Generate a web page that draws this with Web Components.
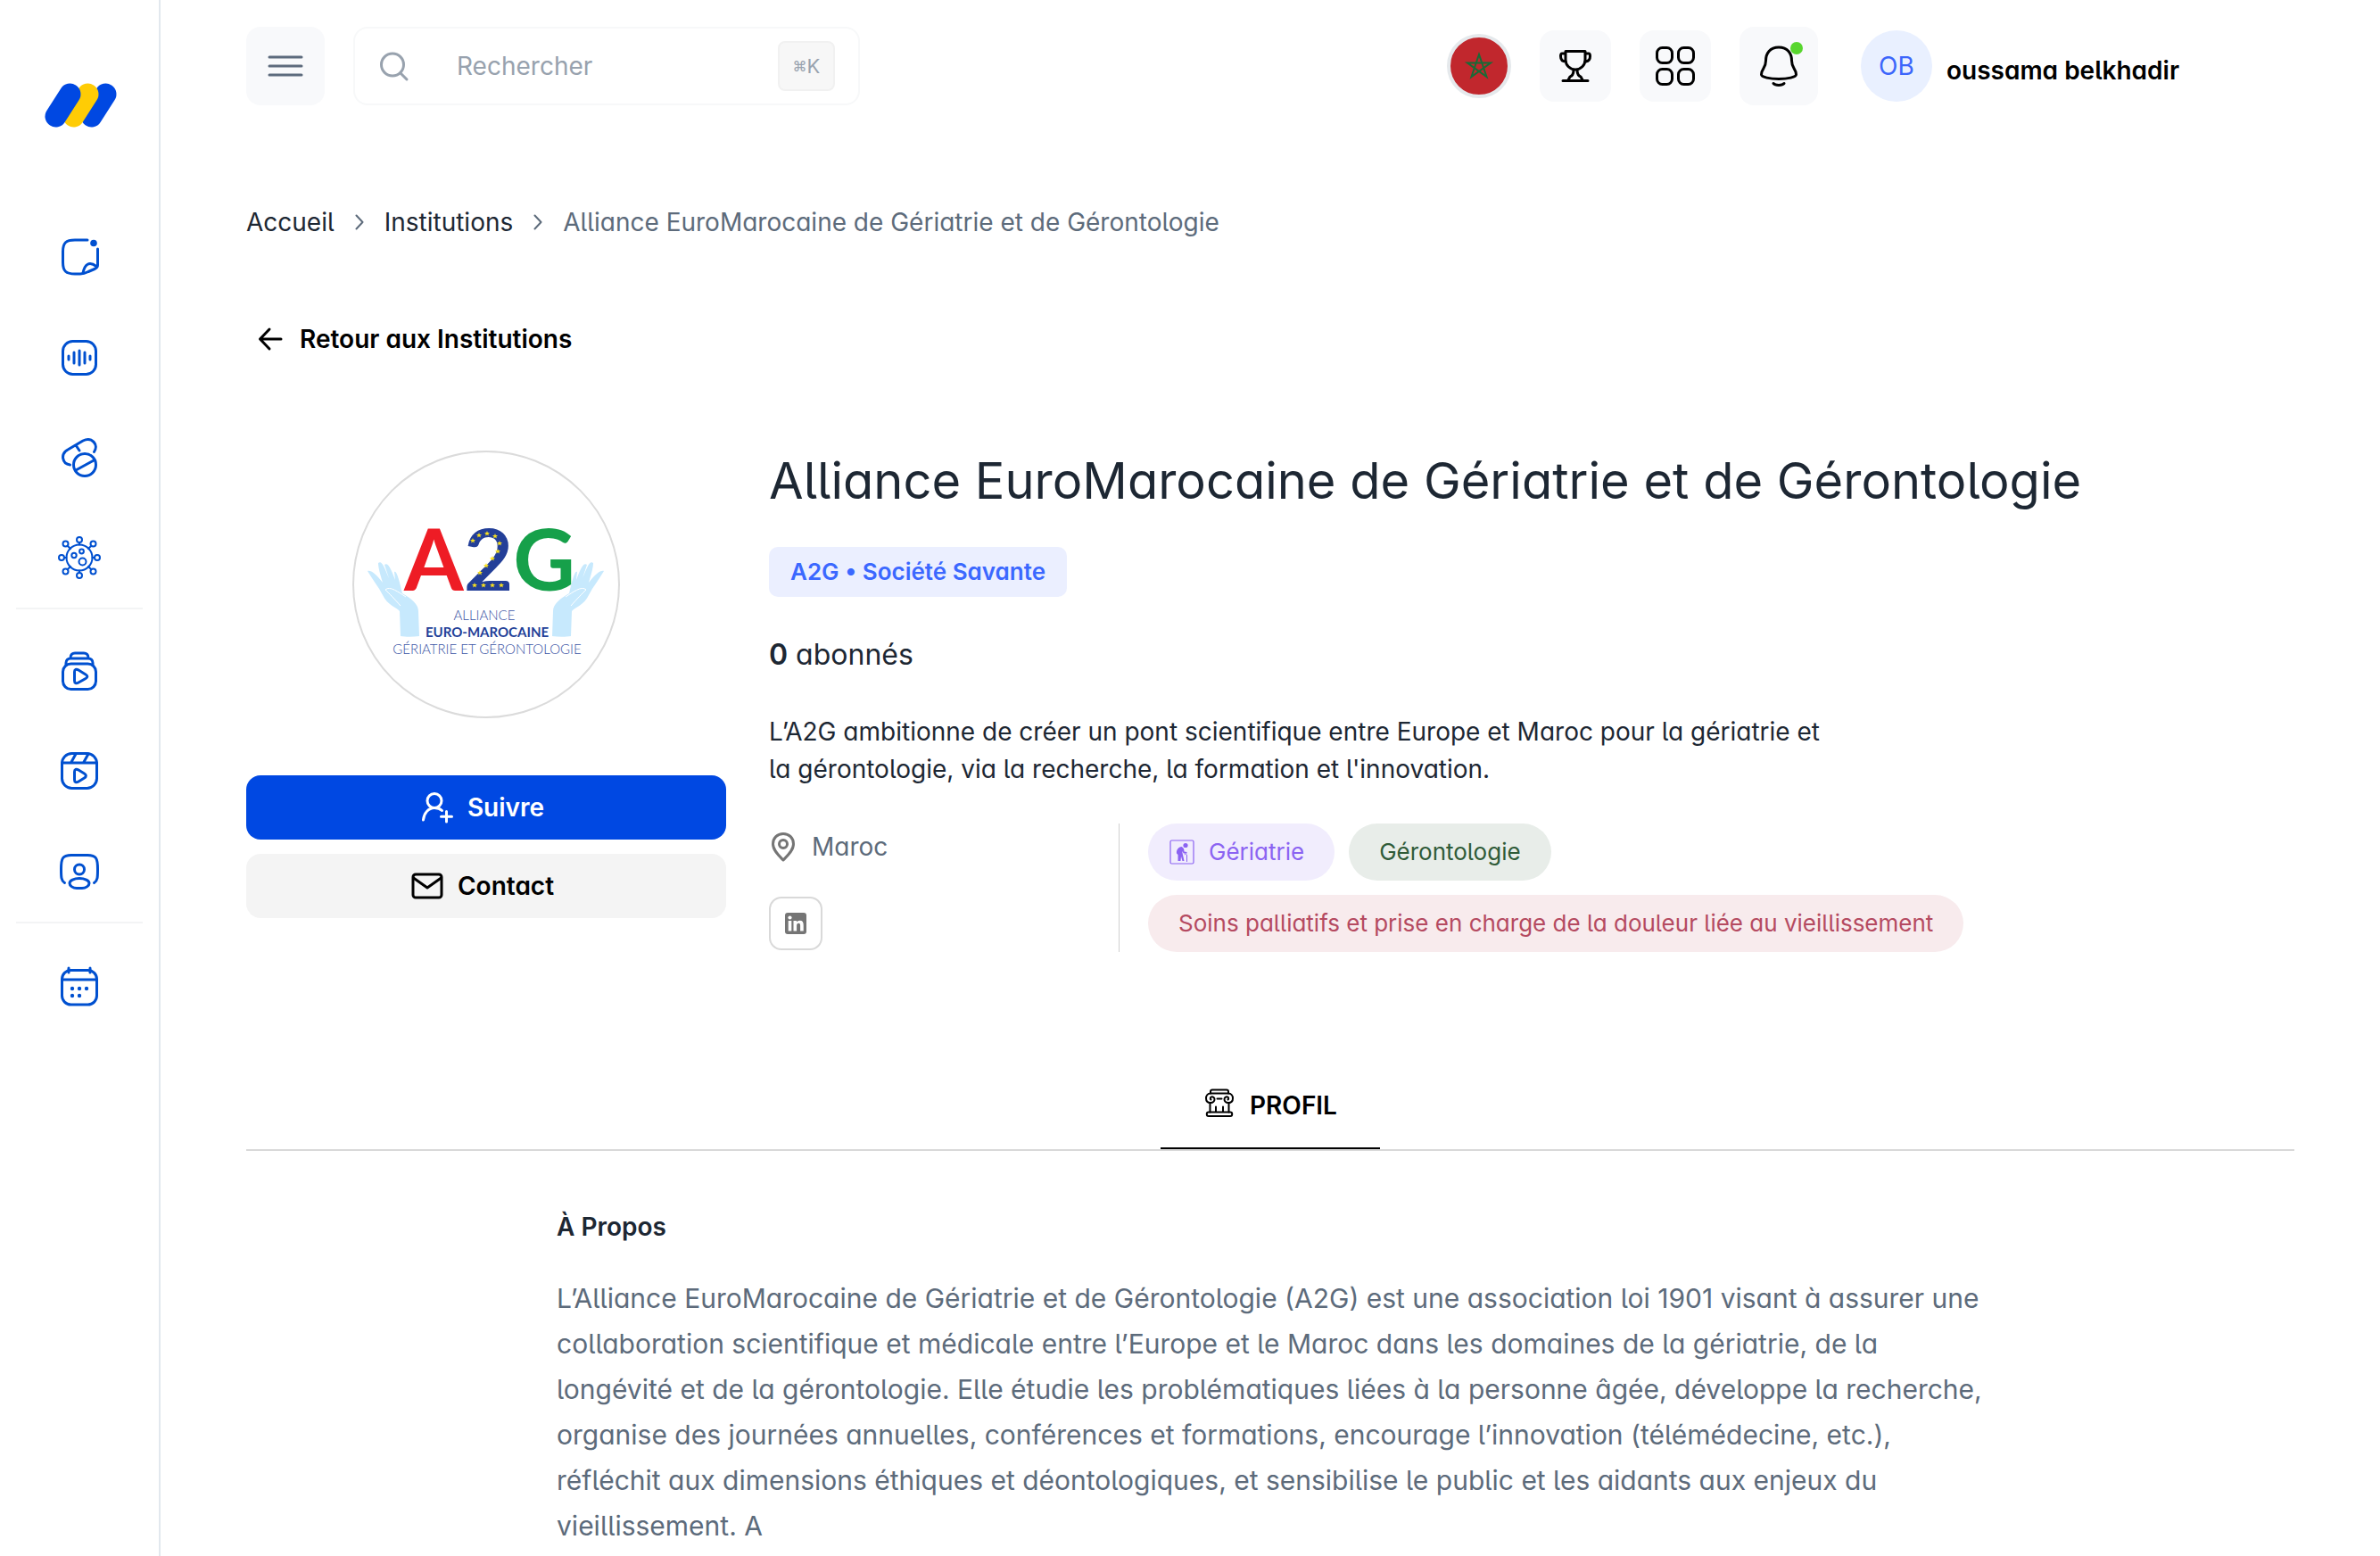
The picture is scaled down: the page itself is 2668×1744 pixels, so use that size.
<!DOCTYPE html>
<html lang="fr">
<head>
<meta charset="utf-8">
<meta name="viewport" content="width=device-width, initial-scale=1">
<title>Alliance EuroMarocaine de Gériatrie et de Gérontologie</title>
<style>
    body{
        margin:0;
        background:#fff;
        color:#1d2733;
        font-family:Inter, "Liberation Sans", sans-serif;
        font-size:28px;
        line-height:42px;
        font-feature-settings:"cv05", "cv11";
    }
</style>
</head>
<body>
<app-root></app-root>

<script>
// [width, height, markup]
const ICONS = {
    logo: [80, 52, `<g stroke-width="24" stroke-linecap="round"><path d="M69.500 13.500 53.500 38.500" stroke="#0048e2"/><path d="M49.500 13.500 33.500 38.500" stroke="#ffcc05"/><path d="M29.500 13.500 13.500 38.500" stroke="#0048e2"/></g>`],
    note: [48, 48, `<path d="M33 4H19C9 4 5.500 7 5.500 17V29C5.500 39 9 42 19 42H25C29 42 31 41 34 39.500L41 36.500C43.500 35.500 44.500 34.500 44.500 32V14"/><path d="M28 41C30 31 35 27.500 43 33.500"/><circle cx="40" cy="7.500" r="3.800" fill="currentColor" stroke="none"/>`],
    wave: [48, 48, `<rect x="5.500" y="5.500" width="37" height="37" rx="11"/><g stroke-width="3"><path d="M12 22V26M18 18V30M24 16V32M30 18V30M36 22V26"/></g>`],
    pills: [48, 48, `<circle cx="30" cy="32" r="12.500"/><path d="M20 38 41 26.500M13.500 32C4.500 31 2.500 19.500 11 15L28 5C38 0 46 9.500 40.500 17.500M20 10 24 16"/>`],
    virus: [48, 48, `<g stroke-width="2"><circle cx="24" cy="24" r="14.500"/><circle cx="24" cy="4" r="3"/><circle cx="24" cy="44" r="3"/><circle cx="4" cy="24" r="3"/><circle cx="44" cy="24" r="3"/><circle cx="8.500" cy="8.500" r="3"/><circle cx="39.500" cy="8.500" r="3"/><circle cx="8.500" cy="39.500" r="3"/><circle cx="39.500" cy="39.500" r="3"/><path d="M24 7V9.500M24 38.500V41M7 24H9.500M38.500 24H41M10.700 10.700 14 14M37.300 10.700 34 14M10.700 37.300 14 34M37.300 37.300 34 34"/><circle cx="18" cy="21.500" r="2.700"/><circle cx="26.500" cy="17" r="2.400"/><circle cx="27.500" cy="28.500" r="4"/></g>`],
    stack: [48, 48, `<rect x="5.500" y="15" width="37" height="28.500" rx="9"/><path d="M9 16V14C9 11 11 9 14 9H34C37 9 39 11 39 14V16M14 9V8C14 5 16 3 19 3H29C32 3 34 5 34 8V9"/><path d="M18.500 24V34C18.500 37 20.500 37.500 23 36L31 31.500C33.500 30 33.500 28.500 31 27L23 22C20.500 20.500 18.500 21 18.500 24Z"/>`],
    reel: [48, 48, `<rect x="4.500" y="3.500" width="39" height="39" rx="11"/><path d="M4.500 14H43.500M20 4 14.500 14M34 4 28.500 14"/><path d="M18.500 24V33C18.500 36 20.500 36.500 23 35L29.500 31C32 29.500 32 27.500 29.500 26L23 22C20.500 20.500 18.500 21 18.500 24Z"/>`],
    person: [48, 48, `<path d="M7.500 36.500C3.500 34 3.500 30 3.500 21C3.500 9 5 5.500 15 5.500H33C43 5.500 44.500 9 44.500 21C44.500 30 44.500 34 40.500 36.500"/><circle cx="24" cy="21.500" r="5.500"/><path d="M13 37C13 34 18 31.500 24 31.500S35 34 35 37S31 42.500 27 42.500H21C17 42.500 13 40 13 37Z"/>`],
    calendar: [48, 48, `<rect x="4.500" y="6.500" width="39" height="38.500" rx="10"/><path d="M4.500 17H43.500M12 4V9M36 4V9"/><g fill="currentColor" stroke="none"><circle cx="16" cy="27" r="2.200"/><circle cx="24" cy="27" r="2.200"/><circle cx="32" cy="27" r="2.200"/><circle cx="16" cy="35" r="2.200"/><circle cx="24" cy="35" r="2.200"/></g>`],
    menu: [40, 24, `<path d="M2 2H38M2 12H38M2 22H38" stroke-width="3"/>`],
    search: [32, 32, `<circle cx="14" cy="14.500" r="12.500"/><path d="M23 24 30 31"/>`],
    star: [30, 30, `<path d="M15 2 23.500 27 2 11.500H28L6.500 27Z" stroke-linejoin="miter"/>`],
    trophy: [36, 36, `<path d="M7 1.500H29V11C29 17 24 22 18 22S7 17 7 11ZM7 4H3C1.500 4 1.500 5 1.500 7C1.500 11 4 13 7.500 13M29 4H33C34.500 4 34.500 5 34.500 7C34.500 11 32 13 28.500 13M16 22C16 28 14 29 12 30L9.500 34.500M20 22C20 28 22 29 24 30L26.500 34.500M4 34.500H32"/>`],
    grid: [44, 44, `<rect x="1.500" y="1.500" width="17" height="17" rx="6"/><rect x="25.500" y="1.500" width="17" height="17" rx="6"/><rect x="1.500" y="25.500" width="17" height="17" rx="6"/><rect x="25.500" y="25.500" width="17" height="17" rx="6"/>`],
    bell: [48, 48, `<path d="M24 3C14 3 9.500 10 9.500 18C9.500 27 4.500 27 4.500 33.500C4.500 36.500 14 38.500 24 38.500S43.500 36.500 43.500 33.500C43.500 27 38.500 27 38.500 18C38.500 10 34 3 24 3Z"/><path d="M18 43.500C20 46 28 46 30 43.500"/>`],
    chevron: [10, 18, `<path d="M1.500 1.500 8.500 9 1.500 16.500"/>`],
    back: [26, 26, `<path d="M25 13H2M12 2 1.500 13 12 24"/>`],
    follow: [36, 36, `<circle cx="15" cy="10.500" r="8"/><path d="M2.500 32C3 25 8 18.500 15 18.500C18.500 18.500 21.500 19.500 23.500 21.500M28.500 22.500V34M22.500 28.200H34.500"/>`],
    mail: [36, 36, `<rect x="2" y="5" width="32" height="26" rx="3"/><path d="M2.500 9 18 20 33.500 9"/>`],
    pin: [32, 32, `<path d="M16 31C11 26 4.500 20 4.500 13C4.500 6 9.500 1.500 16 1.500S27.500 6 27.500 13C27.500 20 21 26 16 31Z"/><circle cx="16" cy="13" r="4.500"/>`],
    linkedin: [26, 26, `<rect x="1" y="1" width="24" height="24" rx="3" fill="currentColor" stroke="none"/><g fill="#fff" stroke="none"><circle cx="6.500" cy="6.500" r="2.100"/><path d="M4.700 10H8.300V21.500H4.700ZM10.500 10H14V11.600C14.700 10.400 16 9.700 17.600 9.700C20.600 9.700 21.700 11.600 21.700 14.800V21.500H18.100V15.500C18.100 13.800 17.700 12.800 16.300 12.800C14.800 12.800 14.100 13.900 14.100 15.500V21.500H10.500Z"/></g>`],
    elder: [28, 28, `<rect x="1" y="1" width="26" height="26" rx="1.500" stroke-width="1.200"/><g fill="currentColor" stroke="none"><circle cx="18" cy="6.500" r="2.600"/><path d="M13.500 8C10 8.500 7.500 11.500 8 15.500L9.500 17 9.500 24H12.500L13 19 14.500 24H16.500L14.500 15 14 13 16 15.500H19.500V14L16.500 13.500C16.500 11 16 9 13.500 8Z"/></g><path d="M17 16.500C18 15.500 19.500 16 19.500 18V24.500" stroke-width="1"/>`],
    column: [32, 32, `<path d="M6 5.500V3.500C6 2 6.500 1.500 8 1.500H24C25.500 1.500 26 2 26 3.500V5.500M5.500 16V26.500M26.500 16V26.500M12 20.500V26M20 20.500V26M13.500 11.500H18.500"/><path d="M6 5.500H26C29 5.500 31 8 31 11S29 16 26 16C23 16 21.500 14 21.500 12S23.500 9 25 9.500S26.500 12 25.500 12.500M6 5.500C3 5.500 1 8 1 11S3 16 6 16C9 16 10.500 14 10.500 12S8.500 9 7 9.500S5.500 12 6.500 12.500"/><rect x="1.800" y="26.500" width="28.400" height="4.500" rx="2"/>`]
};

class AppIcon extends HTMLElement {
    constructor(){
        super();
        this.attachShadow({mode:'open'});
    }

    connectedCallback(){
        const [width, height, markup] = ICONS[this.getAttribute('name')];

        const style = `
            <style>
                :host{
                    display:inline-flex;
                    flex:none;
                }
                svg{
                    display:block;
                    overflow:visible;
                    stroke-width:var(--stroke, 3);
                }
            </style>
        `;

        this.shadowRoot.innerHTML = style + `
            <svg width="${width}" height="${height}" viewBox="0 0 ${width} ${height}" fill="none"
                stroke="currentColor" stroke-linecap="round" stroke-linejoin="round" aria-hidden="true">${markup}</svg>
        `;
    }
}

class SideBar extends HTMLElement {
    constructor(){
        super();
        this.attachShadow({mode:'open'});
    }

    connectedCallback(){
        const groups = [
            [['note', 'Actualités'], ['wave', 'Podcasts'], ['pills', 'Médicaments'], ['virus', 'Maladies']],
            [['stack', 'Chaînes'], ['reel', 'Vidéos'], ['person', 'Experts']],
            [['calendar', 'Agenda']]
        ];

        const style = `
            <style>
                :host{
                    display:block;
                    box-sizing:border-box;
                    width:180px;
                    padding:92px 18px 0;
                    border-right:2px solid #e2e8ee;
                }
                .logo{
                    display:flex;
                    justify-content:center;
                    margin-bottom:89px;
                }
                ul{
                    list-style:none;
                    margin:0;
                    padding:0;
                }
                ul + ul{
                    border-top:2px solid #f3f4f5;
                    padding-top:14px;
                }
                li a{
                    display:flex;
                    align-items:center;
                    justify-content:center;
                    height:112px;
                    color:#0050d0;
                }
            </style>
        `;

        const lists = groups.map(group => `
            <ul>${group.map(([icon, label]) => `
                <li><a href="#" aria-label="${label}"><app-icon name="${icon}"></app-icon></a></li>`).join('')}
            </ul>`).join('');

        this.shadowRoot.innerHTML = style + `
            <a class="logo" href="#" aria-label="Accueil"><app-icon name="logo"></app-icon></a>
            <nav>${lists}</nav>
        `;
    }
}

class SearchBox extends HTMLElement {
    constructor(){
        super();
        this.attachShadow({mode:'open'});
    }

    connectedCallback(){
        const style = `
            <style>
                :host{
                    display:block;
                    width:568px;
                }
                .box{
                    display:flex;
                    align-items:center;
                    box-sizing:border-box;
                    height:88px;
                    padding:0 26px 0 28px;
                    border:2px solid #f7f8f9;
                    border-radius:16px;
                }
                label{
                    display:flex;
                    margin-right:54px;
                    color:#98a2ae;
                }
                input{
                    flex:1;
                    min-width:0;
                    padding:0;
                    border:0;
                    outline:0;
                    background:none;
                    color:#1d2733;
                    font:inherit;
                    font-feature-settings:inherit;
                }
                input::placeholder{
                    color:#98a2ae;
                    opacity:1;
                }
                kbd{
                    display:flex;
                    align-items:center;
                    justify-content:center;
                    box-sizing:border-box;
                    width:64px;
                    height:56px;
                    border:2px solid #f1f1f1;
                    border-radius:8px;
                    background:#f7f7f7;
                    color:#98a2ae;
                    font-family:inherit;
                    font-size:22px;
                }
                kbd span{
                    font-size:16px;
                }
            </style>
        `;

        this.shadowRoot.innerHTML = style + `
            <div class="box">
                <label for="query" aria-label="Rechercher"><app-icon name="search"></app-icon></label>
                <input id="query" type="text" placeholder="Rechercher">
                <kbd><span>⌘</span>K</kbd>
            </div>
        `;
    }
}

class TopBar extends HTMLElement {
    constructor(){
        super();
        this.attachShadow({mode:'open'});
    }

    connectedCallback(){
        const style = `
            <style>
                :host{
                    display:flex;
                    align-items:center;
                    gap:32px;
                    padding:30px 225px 30px 96px;
                }
                button{
                    display:flex;
                    align-items:center;
                    justify-content:center;
                    flex:none;
                    width:80px;
                    height:80px;
                    padding:0;
                    border:0;
                    border-radius:16px;
                    background:#f8f9fb;
                    color:#000;
                }
                .large{
                    width:88px;
                    height:88px;
                }
                .menu{
                    color:#5d6b7d;
                }
                .flag{
                    box-sizing:border-box;
                    width:72px;
                    height:72px;
                    margin-left:auto;
                    border:4px solid #e5e9ec;
                    border-radius:50%;
                    background:#c1272d;
                    color:#176b36;
                    --stroke:2;
                }
                .bell{
                    position:relative;
                }
                .bell::after{
                    content:"";
                    position:absolute;
                    top:17px;
                    right:17px;
                    width:14px;
                    height:14px;
                    border-radius:50%;
                    background:#58d62e;
                }
                .user{
                    display:flex;
                    align-items:center;
                    gap:16px;
                    margin-left:16px;
                    color:#000;
                    font-weight:600;
                }
                .avatar{
                    display:flex;
                    align-items:center;
                    justify-content:center;
                    width:80px;
                    height:80px;
                    border-radius:50%;
                    background:#e9f0ff;
                    color:#3c66fb;
                    font-weight:400;
                }
                .name{
                    padding-top:10px;
                }
            </style>
        `;

        this.shadowRoot.innerHTML = style + `
            <button class="large menu" aria-label="Menu"><app-icon name="menu"></app-icon></button>
            <search-box></search-box>
            <button class="flag" aria-label="Pays"><app-icon name="star"></app-icon></button>
            <button aria-label="Classement"><app-icon name="trophy"></app-icon></button>
            <button aria-label="Applications"><app-icon name="grid"></app-icon></button>
            <button class="large bell" aria-label="Notifications"><app-icon name="bell"></app-icon></button>
            <div class="user">
                <span class="avatar">OB</span>
                <span class="name">oussama belkhadir</span>
            </div>
        `;
    }
}

class BreadCrumb extends HTMLElement {
    constructor(){
        super();
        this.attachShadow({mode:'open'});
    }

    connectedCallback(){
        const style = `
            <style>
                :host{
                    display:block;
                }
                nav{
                    display:flex;
                    align-items:center;
                    gap:23px;
                    color:#5d6b7b;
                    --stroke:2;
                }
                a{
                    color:#1d2733;
                    text-decoration:none;
                }
            </style>
        `;

        this.shadowRoot.innerHTML = style + `
            <nav aria-label="Fil d'Ariane">
                <a href="#">Accueil</a>
                <app-icon name="chevron"></app-icon>
                <a href="#">Institutions</a>
                <app-icon name="chevron"></app-icon>
                <span><slot></slot></span>
            </nav>
        `;
    }
}

class InstitutionLogo extends HTMLElement {
    constructor(){
        super();
        this.attachShadow({mode:'open'});
    }

    connectedCallback(){
        // centres of the stars that follow the curve of the 2
        const stars = [[135, 101], [142, 95], [151, 93], [160, 96], [165, 104], [163, 113], [157, 121], [150, 129], [143, 137], [137, 151], [147, 151], [157, 151], [167, 151]];
        const star = 'M0-3 .8-1 3-.9 1.300.4 1.900 2.600 0 1.300-1.900 2.600-1.300.4-3-.9-.8-1Z';
        const hand = `
            <path d="M17 135C21 134 26 138 34 148C31 138 29 131 29 126C33 123 35 129 41 143L36 128C40 125 43 132 48 145L47 136C50 134 53 148 56 160C66 166 74 172 74 180L75 208C68 209 60 209 54 208L53 180C50 176 39 173 34 162C29 152 22 144 17 135Z"/>
            <path d="M37 156C42 151 52 159 60 164M37 156C42 161 47 166 54 174" fill="none" stroke="#fff"/>
        `;

        const style = `
            <style>
                :host{
                    display:block;
                    box-sizing:border-box;
                    width:300px;
                    height:300px;
                    border:2px solid #dbdbdb;
                    border-radius:50%;
                    overflow:hidden;
                }
                svg{
                    display:block;
                    margin:-2px;
                    font-family:Lato, sans-serif;
                    font-size:15px;
                    line-height:1;
                }
                .big{
                    font-size:96px;
                    font-weight:700;
                }
            </style>
        `;

        this.shadowRoot.innerHTML = style + `
            <svg width="300" height="300" viewBox="0 0 300 300" role="img" aria-label="A2G">
                <g fill="#c7e9fd">
                    <g>${hand}</g>
                    <g transform="translate(299 0) scale(-1 1)">${hand}</g>
                </g>
                <text class="big" x="154" y="157" text-anchor="middle"><tspan fill="#ee1c25">A</tspan><tspan fill="#233f98">2</tspan><tspan fill="#16a04a">G</tspan></text>
                <g fill="#f9e11e">${stars.map(([x, y]) => `<path transform="translate(${x} ${y})" d="${star}"/>`).join('')}</g>
                <g fill="#3a53a4" text-anchor="middle">
                    <text x="148" y="190" font-weight="300">ALLIANCE</text>
                    <text x="151" y="209" font-weight="700" fill="#233f98">EURO-MAROCAINE</text>
                    <text x="151" y="228" font-weight="300">GÉRIATRIE ET GÉRONTOLOGIE</text>
                </g>
            </svg>
        `;
    }
}

class ActionButton extends HTMLElement {
    constructor(){
        super();
        this.attachShadow({mode:'open'});
    }

    connectedCallback(){
        const style = `
            <style>
                :host{
                    display:block;
                }
                button{
                    display:flex;
                    align-items:center;
                    justify-content:center;
                    gap:16px;
                    width:100%;
                    height:72px;
                    padding:0 8px 0 0;
                    border:0;
                    border-radius:16px;
                    background:#f4f4f4;
                    color:#000;
                    font:inherit;
                    font-weight:600;
                    font-feature-settings:inherit;
                }
                :host([primary]) button{
                    background:#0048e2;
                    color:#fff;
                }
            </style>
        `;

        this.shadowRoot.innerHTML = style + `
            <button><app-icon name="${this.getAttribute('icon')}"></app-icon><slot></slot></button>
        `;
    }
}

class TopicChip extends HTMLElement {
    constructor(){
        super();
        this.attachShadow({mode:'open'});
    }

    connectedCallback(){
        const icon = this.getAttribute('icon');

        const style = `
            <style>
                :host{
                    display:inline-flex;
                    align-items:center;
                    gap:16px;
                    box-sizing:border-box;
                    height:64px;
                    padding:0 34px;
                    border-radius:32px;
                    background:#e8ede9;
                    color:#2f5b38;
                    font-size:26px;
                }
                :host([icon]){
                    padding-left:24px;
                }
                :host([tone="violet"]){
                    background:#f1edfd;
                    color:#8b63f2;
                }
                :host([tone="rose"]){
                    background:#f8ebed;
                    color:#b54a61;
                }
            </style>
        `;

        this.shadowRoot.innerHTML = style + `
            ${icon ? `<app-icon name="${icon}"></app-icon>` : ''}<slot></slot>
        `;
    }
}

class InstitutionProfile extends HTMLElement {
    constructor(){
        super();
        this.attachShadow({mode:'open'});
    }

    connectedCallback(){
        const style = `
            <style>
                :host{
                    display:grid;
                    grid-template-columns:538px 1fr;
                    gap:48px;
                }
                .actions{
                    display:flex;
                    flex-direction:column;
                    gap:16px;
                }
                institution-logo{
                    align-self:center;
                    margin-bottom:48px;
                }
                .details{
                    display:flex;
                    flex-direction:column;
                    align-items:flex-start;
                    gap:40px;
                }
                h1, p{
                    margin:0;
                }
                h1{
                    font-size:56px;
                    line-height:68px;
                    font-weight:400;
                }
                .kind{
                    padding:7px 24px;
                    border-radius:10px;
                    background:#ebefff;
                    color:#3b68ff;
                    font-size:26px;
                    font-weight:600;
                }
                .followers{
                    font-size:32px;
                    line-height:50px;
                }
                .followers strong{
                    font-weight:600;
                }
                .summary{
                    max-width:1200px;
                }
                .meta{
                    display:grid;
                    grid-template-columns:392px 1fr;
                }
                .place{
                    display:flex;
                    align-items:center;
                    gap:16px;
                    height:52px;
                    margin-bottom:30px;
                    color:#5d6b7b;
                }
                .place app-icon{
                    color:#757575;
                }
                .social{
                    display:flex;
                    align-items:center;
                    justify-content:center;
                    box-sizing:border-box;
                    width:60px;
                    height:60px;
                    border:2px solid #d9d9d9;
                    border-radius:14px;
                    color:#757575;
                }
                .topics{
                    display:flex;
                    flex-wrap:wrap;
                    gap:16px;
                    padding-left:32px;
                    border-left:1px solid #d0d0d0;
                }
            </style>
        `;

        this.shadowRoot.innerHTML = style + `
            <div class="actions">
                <institution-logo></institution-logo>
                <action-button primary icon="follow">Suivre</action-button>
                <action-button icon="mail">Contact</action-button>
            </div>
            <div class="details">
                <h1>Alliance EuroMarocaine de Gériatrie et de Gérontologie</h1>
                <span class="kind">A2G • Société Savante</span>
                <p class="followers"><strong>0</strong> abonnés</p>
                <p class="summary"><slot></slot></p>
                <div class="meta">
                    <div>
                        <div class="place"><app-icon name="pin"></app-icon>Maroc</div>
                        <a class="social" href="#" aria-label="LinkedIn"><app-icon name="linkedin"></app-icon></a>
                    </div>
                    <div class="topics">
                        <topic-chip tone="violet" icon="elder">Gériatrie</topic-chip>
                        <topic-chip>Gérontologie</topic-chip>
                        <topic-chip tone="rose">Soins palliatifs et prise en charge de la douleur liée au vieillissement</topic-chip>
                    </div>
                </div>
            </div>
        `;
    }
}

class ProfileTabs extends HTMLElement {
    constructor(){
        super();
        this.attachShadow({mode:'open'});
    }

    connectedCallback(){
        const style = `
            <style>
                :host{
                    display:block;
                }
                .tabs{
                    display:flex;
                    justify-content:center;
                    border-bottom:2px solid #d9d9d9;
                }
                button{
                    display:flex;
                    align-items:center;
                    gap:18px;
                    height:102px;
                    padding:6px 48px 0 50px;
                    border:0;
                    border-bottom:2px solid #000;
                    background:none;
                    color:#000;
                    font:inherit;
                    font-weight:600;
                    --stroke:2;
                }
                app-icon{
                    padding-bottom:6px;
                }
            </style>
        `;

        this.shadowRoot.innerHTML = style + `
            <div class="tabs" role="tablist">
                <button role="tab" aria-selected="true"><app-icon name="column"></app-icon>PROFIL</button>
            </div>
        `;
    }
}

class AboutSection extends HTMLElement {
    constructor(){
        super();
        this.attachShadow({mode:'open'});
    }

    connectedCallback(){
        const style = `
            <style>
                :host{
                    display:block;
                    max-width:1600px;
                    margin:0 auto;
                }
                h2{
                    margin:0 0 34px;
                    font-size:28px;
                    font-weight:600;
                }
                p{
                    margin:0;
                    color:#5d6b7b;
                    font-size:30px;
                    line-height:51px;
                }
            </style>
        `;

        this.shadowRoot.innerHTML = style + `
            <h2>À Propos</h2>
            <p><slot></slot></p>
        `;
    }
}

class Root extends HTMLElement {
    constructor(){
        super();
        this.attachShadow({mode:'open'});
    }

    connectedCallback(){
        const style = `
            <style>
                :host{
                    display:grid;
                    grid-template-columns:auto 1fr;
                    min-height:100vh;
                }
                main{
                    padding:80px 96px 0;
                }
                .back{
                    display:inline-flex;
                    align-items:center;
                    gap:20px;
                    margin:89px 0 104px;
                    padding-left:14px;
                    color:#000;
                    font-weight:600;
                    text-decoration:none;
                }
                profile-tabs{
                    margin:119px 0 64px;
                }
            </style>
        `;

        this.shadowRoot.innerHTML = style + `
            <side-bar></side-bar>
            <div>
                <top-bar></top-bar>
                <main>
                    <bread-crumb>Alliance EuroMarocaine de Gériatrie et de Gérontologie</bread-crumb>
                    <a class="back" href="#"><app-icon name="back"></app-icon>Retour aux Institutions</a>
                    <institution-profile>L’A2G ambitionne de créer un pont scientifique entre Europe et Maroc pour la gériatrie et la gérontologie, via la recherche, la formation et l'innovation.</institution-profile>
                    <profile-tabs></profile-tabs>
                    <about-section>L’Alliance EuroMarocaine de Gériatrie et de Gérontologie (A2G) est une association loi 1901 visant à assurer une collaboration scientifique et médicale entre l’Europe et le Maroc dans les domaines de la gériatrie, de la longévité et de la gérontologie. Elle étudie les problématiques liées à la personne âgée, développe la recherche, organise des journées annuelles, conférences et formations, encourage l’innovation (télémédecine, etc.), réfléchit aux dimensions éthiques et déontologiques, et sensibilise le public et les aidants aux enjeux du vieillissement. A</about-section>
                </main>
            </div>
        `;
    }
}

customElements.define('app-icon', AppIcon);
customElements.define('side-bar', SideBar);
customElements.define('search-box', SearchBox);
customElements.define('top-bar', TopBar);
customElements.define('bread-crumb', BreadCrumb);
customElements.define('institution-logo', InstitutionLogo);
customElements.define('action-button', ActionButton);
customElements.define('topic-chip', TopicChip);
customElements.define('institution-profile', InstitutionProfile);
customElements.define('profile-tabs', ProfileTabs);
customElements.define('about-section', AboutSection);
customElements.define('app-root', Root);
</script>
</body>
</html>
